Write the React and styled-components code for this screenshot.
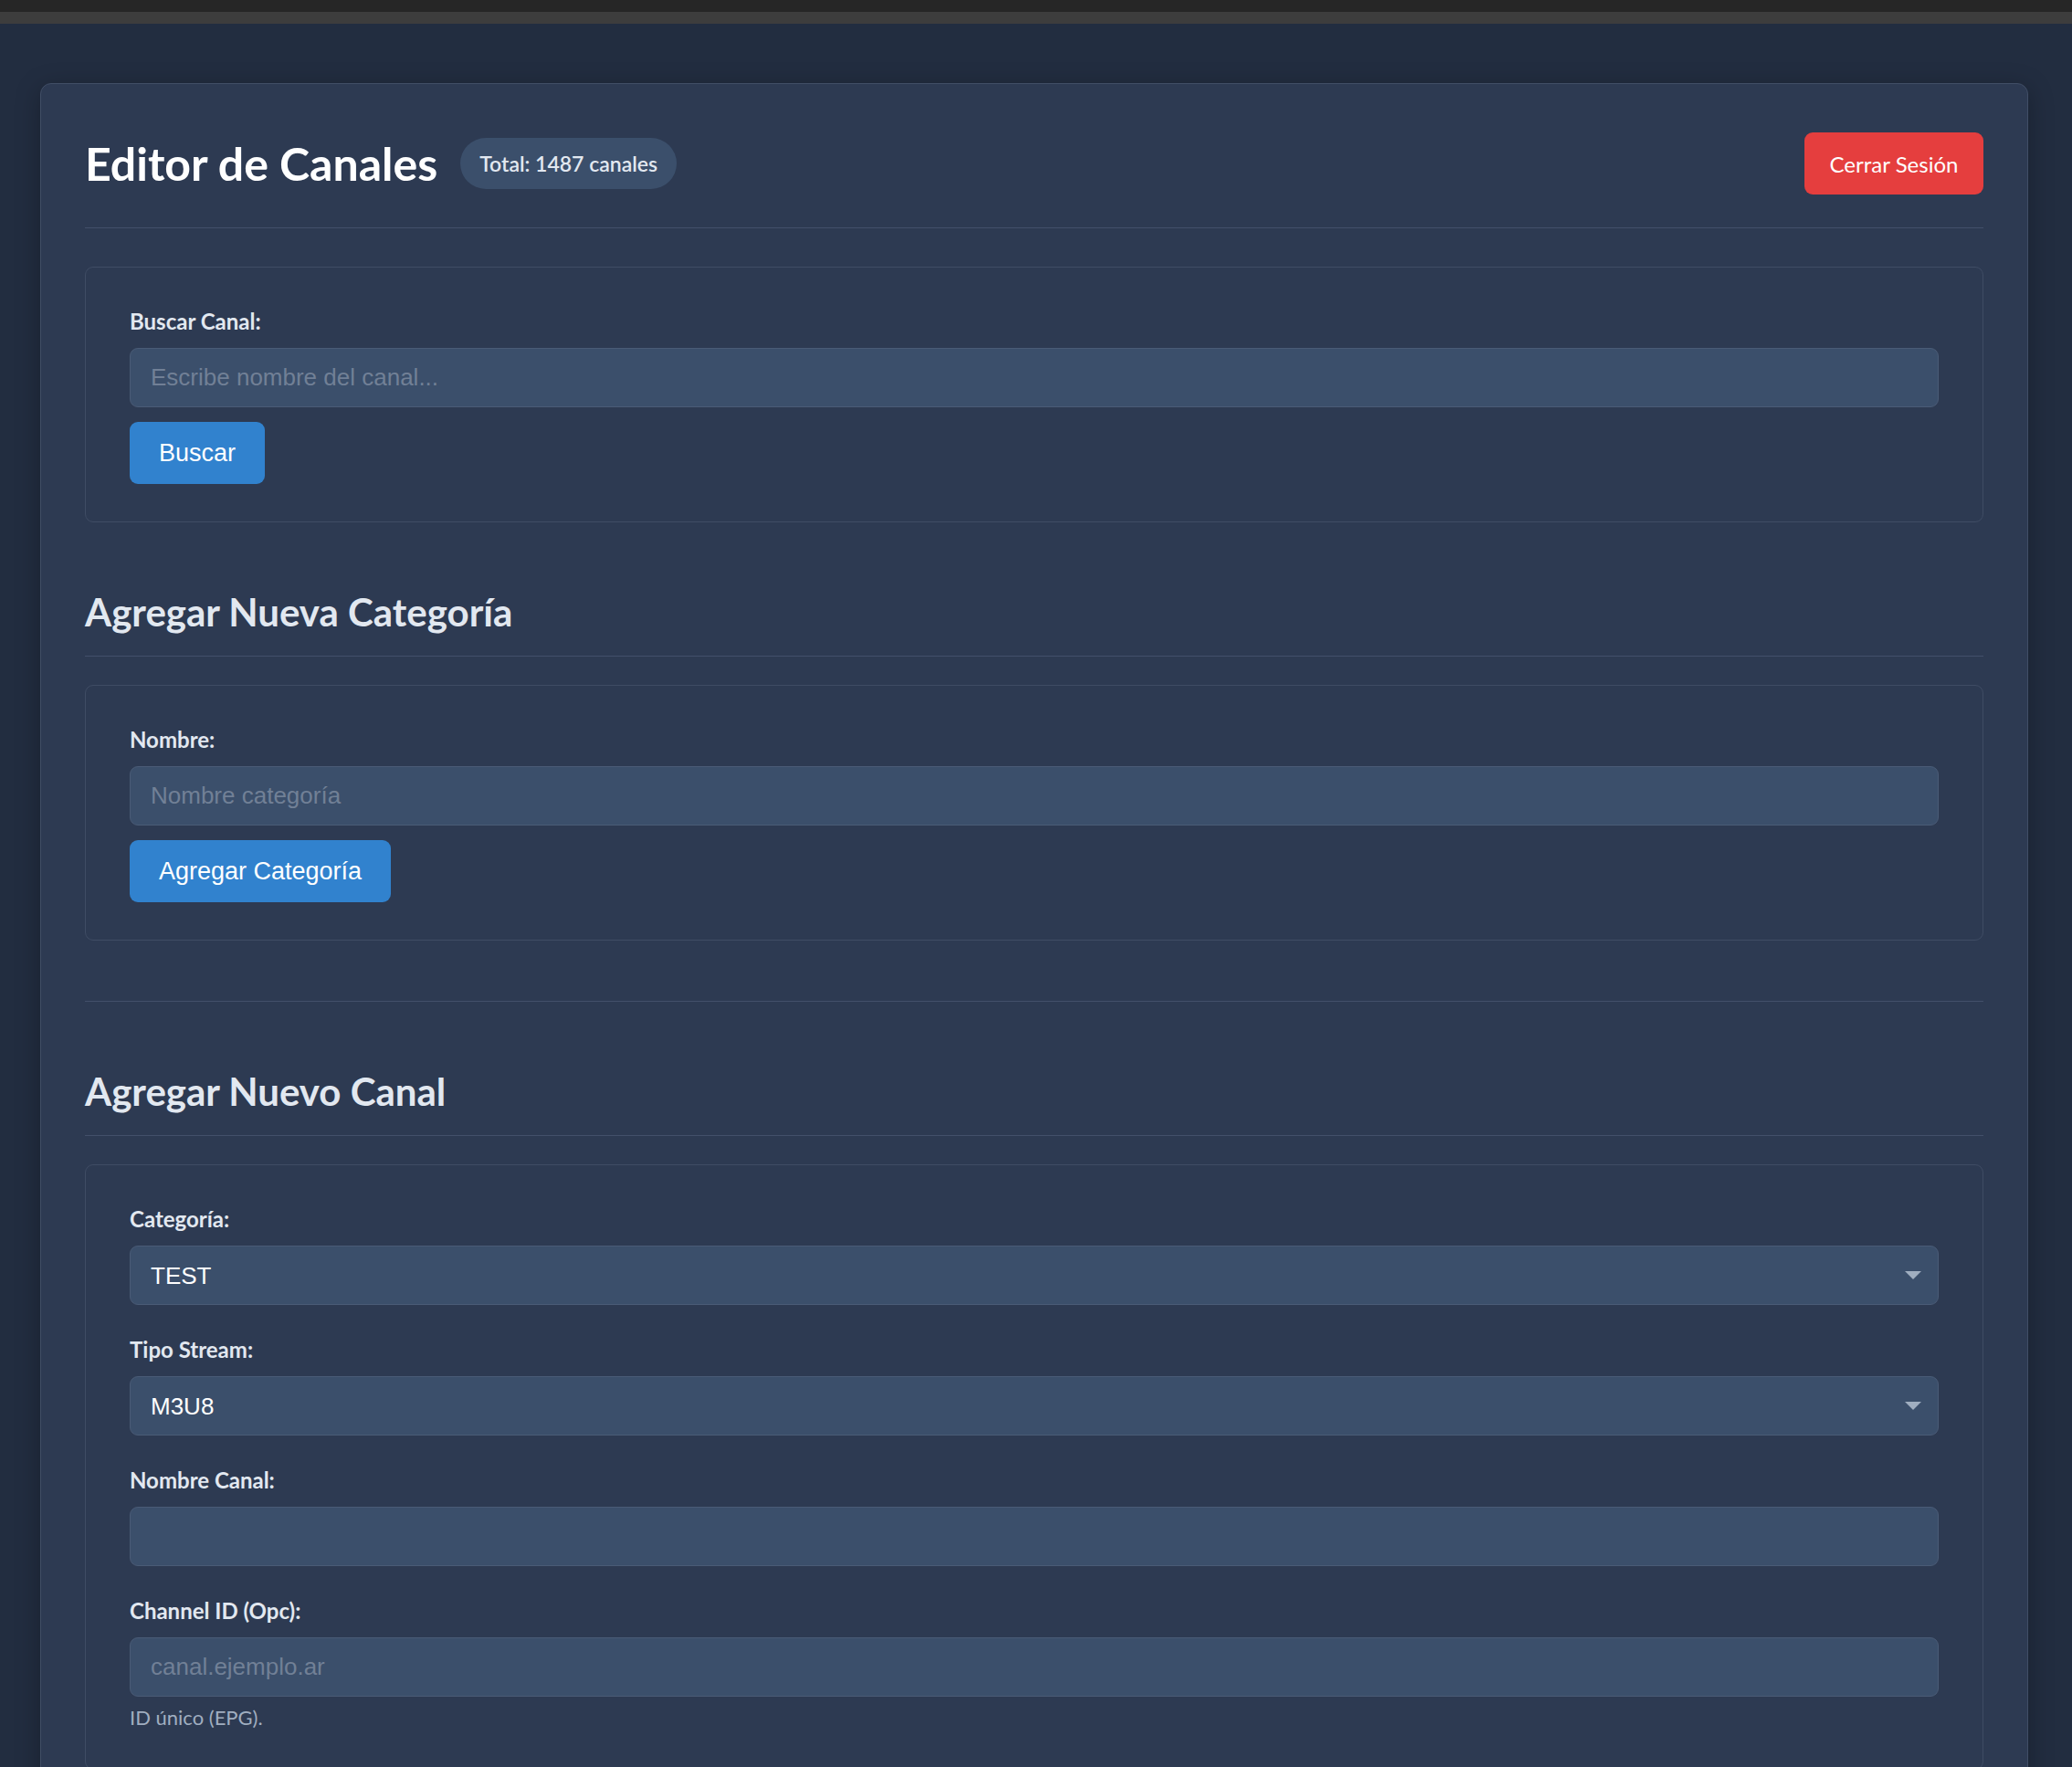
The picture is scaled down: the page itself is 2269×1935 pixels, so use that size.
import React from 'react';
import styled, {createGlobalStyle} from 'styled-components';

const GlobalStyle = createGlobalStyle`
  * {
    box-sizing: border-box;
  }

  body {
    margin: 0;
    background: #222d40;
    color: #e2e8f0;
    font-family: Lato, "Open Sans", sans-serif;
  }
`;

const BrowserChrome = styled.div`
  height: 26px;
  background: linear-gradient(to bottom, #262626 0, #262626 13px, #3d3d3d 13px, #3d3d3d 100%);
`;

const Page = styled.main`
  padding: 65px 48px 0 44px;
`;

const Card = styled.section`
  background: #2d3a52;
  border: 1px solid #414e66;
  border-radius: 12px;
  padding: 48px;
  box-shadow: 0 6px 28px rgba(0, 0, 0, 0.28);
`;

const Header = styled.header`
  display: flex;
  align-items: center;
  justify-content: space-between;
  height: 110px;
  padding-bottom: 31px;
  margin-bottom: 42px;
  border-bottom: 1px solid #43506a;
`;

const TitleGroup = styled.div`
  display: flex;
  align-items: center;
  gap: 25px;
`;

const Title = styled.h1`
  margin: 0;
  font-size: 50px;
  font-weight: 700;
  line-height: 1.2;
  color: #ffffff;
`;

const Badge = styled.span`
  display: inline-flex;
  align-items: center;
  height: 56px;
  padding: 0 21px;
  border-radius: 28px;
  background: #3b4f6b;
  color: #e2e8f0;
  font-size: 23px;
  font-weight: 600;
`;

const LogoutButton = styled.button`
  width: 196px;
  height: 68px;
  border: none;
  border-radius: 9px;
  background: #e53e3e;
  color: #ffffff;
  font-family: Lato, sans-serif;
  font-size: 24px;
  cursor: pointer;
`;

const Panel = styled.div`
  border: 1px solid #3f4c64;
  border-radius: 9px;
  padding: 41px 48px 41px;
`;

const FieldGroup = styled.div`
  margin-bottom: ${({$last}) => ($last ? '0' : '31px')};
`;

const FieldLabel = styled.label`
  display: block;
  margin-bottom: 11px;
  font-size: 24px;
  font-weight: 700;
  line-height: 36px;
  color: #e2e8f0;
`;

const TextInput = styled.input`
  display: block;
  width: 100%;
  height: 65px;
  padding: 0 22px;
  border: 1px solid #4a5b76;
  border-radius: 9px;
  background: #3b4f6b;
  color: #e2e8f0;
  font-family: "Liberation Sans", Arial, sans-serif;
  font-size: 26px;
  outline: none;

  &::placeholder {
    color: #718096;
  }
`;

const SelectWrap = styled.div`
  position: relative;
`;

const Select = styled.select`
  display: block;
  width: 100%;
  height: 65px;
  padding: 0 22px;
  border: 1px solid #4a5b76;
  border-radius: 9px;
  background: #3b4f6b;
  color: #ffffff;
  font-family: "Liberation Sans", Arial, sans-serif;
  font-size: 26px;
  appearance: none;
  outline: none;
`;

const Caret = styled.span`
  position: absolute;
  right: 19px;
  top: 28px;
  width: 0;
  height: 0;
  border-left: 9px solid transparent;
  border-right: 9px solid transparent;
  border-top: 9px solid #a0aec0;
  pointer-events: none;
`;

const PrimaryButton = styled.button`
  margin-top: 16px;
  height: 68px;
  padding: 0 32px;
  border: none;
  border-radius: 9px;
  background: #3182ce;
  color: #ffffff;
  font-family: "Liberation Sans", Arial, sans-serif;
  font-size: 27px;
  cursor: pointer;
`;

const SectionTitle = styled.h2`
  margin: 74px 0 31px;
  padding-bottom: 24px;
  border-bottom: 1px solid #43506a;
  font-size: 42px;
  font-weight: 700;
  line-height: 48px;
  color: #e2e8f0;
`;

const Separator = styled.hr`
  margin: 66px 0 0;
  border: none;
  border-top: 1px solid #43506a;
`;

const HelpText = styled.small`
  display: block;
  margin-top: 8px;
  font-size: 22px;
  line-height: 30px;
  color: #a0aec0;
`;

const SelectField = ({label, value, options}) => (
  <FieldGroup>
    <FieldLabel>{label}</FieldLabel>
    <SelectWrap>
      <Select defaultValue={value}>
        {options.map(option => (
          <option key={option} value={option}>{option}</option>
        ))}
      </Select>
      <Caret />
    </SelectWrap>
  </FieldGroup>
);

const App = () => {
  return (
    <>
      <GlobalStyle />
      <BrowserChrome />
      <Page>
        <Card>
          <Header>
            <TitleGroup>
              <Title>Editor de Canales</Title>
              <Badge>Total: 1487 canales</Badge>
            </TitleGroup>
            <LogoutButton>Cerrar Sesión</LogoutButton>
          </Header>

          <Panel>
            <FieldLabel>Buscar Canal:</FieldLabel>
            <TextInput placeholder='Escribe nombre del canal...' />
            <PrimaryButton>Buscar</PrimaryButton>
          </Panel>

          <SectionTitle>Agregar Nueva Categoría</SectionTitle>
          <Panel>
            <FieldLabel>Nombre:</FieldLabel>
            <TextInput placeholder='Nombre categoría' />
            <PrimaryButton>Agregar Categoría</PrimaryButton>
          </Panel>

          <Separator />

          <SectionTitle>Agregar Nuevo Canal</SectionTitle>
          <Panel>
            <SelectField label='Categoría:' value='TEST' options={['TEST']} />
            <SelectField label='Tipo Stream:' value='M3U8' options={['M3U8', 'MP4', 'DASH']} />
            <FieldGroup>
              <FieldLabel>Nombre Canal:</FieldLabel>
              <TextInput />
            </FieldGroup>
            <FieldGroup $last>
              <FieldLabel>Channel ID (Opc):</FieldLabel>
              <TextInput placeholder='canal.ejemplo.ar' />
              <HelpText>ID único (EPG).</HelpText>
            </FieldGroup>
          </Panel>
        </Card>
      </Page>
    </>
  );
};

export default App;
